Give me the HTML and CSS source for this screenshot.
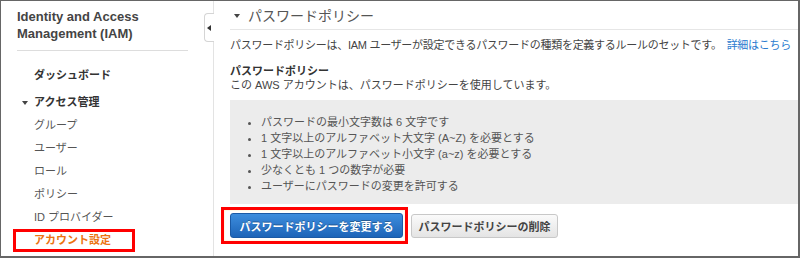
FILE: index.html
```html
<!DOCTYPE html>
<html lang="ja">
<head>
    <meta charset="utf-8">
    <title>IAM - アカウント設定</title>
    <link rel="stylesheet" href="styles.css">
</head>
<body>
    <div class="frame">
        <div class="sidebar">
            <h1 class="side-title">Identity and Access Management (IAM)</h1>
            <hr class="side-rule">
            <ul class="nav">
                <li class="nav-top">ダッシュボード</li>
                <li class="nav-group"><span class="caret"></span>アクセス管理</li>
                <li class="nav-item">グループ</li>
                <li class="nav-item">ユーザー</li>
                <li class="nav-item">ロール</li>
                <li class="nav-item">ポリシー</li>
                <li class="nav-item">ID プロバイダー</li>
                <li class="nav-item current">アカウント設定</li>
            </ul>
            <div class="collapse-tab"><span class="tab-arrow"></span></div>
        </div>

        <div class="main">
            <h2 class="section-head"><span class="caret"></span>パスワードポリシー</h2>
            <p class="intro">パスワードポリシーは、IAM ユーザーが設定できるパスワードの種類を定義するルールのセットです。<a href="#" class="link">詳細はこちら</a></p>
            <div class="status">
                <div class="status-title">パスワードポリシー</div>
                <div>この AWS アカウントは、パスワードポリシーを使用しています。</div>
            </div>
            <div class="rules">
                <ul>
                    <li>パスワードの最小文字数は 6 文字です</li>
                    <li>1 文字以上のアルファベット大文字 (A~Z) を必要とする</li>
                    <li>1 文字以上のアルファベット小文字 (a~z) を必要とする</li>
                    <li>少なくとも 1 つの数字が必要</li>
                    <li>ユーザーにパスワードの変更を許可する</li>
                </ul>
            </div>
            <div class="actions">
                <div class="mark">
                    <button class="btn btn-primary">パスワードポリシーを変更する</button>
                </div>
                <button class="btn btn-default">パスワードポリシーの削除</button>
            </div>
        </div>
    </div>
</body>
</html>
```

FILE: styles.css
```css
html, body {
    margin: 0;
    padding: 0;
    background: #fff;
}
body {
    font-family: "Liberation Sans", "Noto Sans CJK JP", sans-serif;
    font-size: 11px;
    color: #444;
}
.frame {
    box-sizing: border-box;
    width: 800px;
    height: 258px;
    border-top: 1px solid #666;
    border-left: 1px solid #666;
    border-right: 2px solid #666;
    border-bottom: 2px solid #666;
    display: flex;
    overflow: hidden;
}

/* sidebar */
.sidebar {
    position: relative;
    width: 213px;
    flex-shrink: 0;
    border-right: 1px solid #e3e3e3;
    padding: 7px 0 0 16px;
    box-sizing: border-box;
}
.side-title {
    margin: 0;
    font-size: 13px;
    line-height: 17px;
    font-weight: bold;
    color: #444;
}
.side-rule {
    border: none;
    border-top: 1px solid #ddd;
    margin: 8px 25px 0 0;
}
.nav {
    list-style: none;
    margin: 0;
    padding: 13px 0 0 0;
}
.nav li {
    line-height: 23px;
    height: 23px;
    padding-left: 17px;
    color: #555;
}
.nav .nav-top {
    font-weight: bold;
    color: #333;
    margin-bottom: 4px;
}
.nav .nav-group {
    font-weight: bold;
    color: #333;
    position: relative;
}
.caret {
    display: inline-block;
    width: 0;
    height: 0;
    border-left: 3px solid transparent;
    border-right: 3px solid transparent;
    border-top: 4px solid #444;
    vertical-align: middle;
}
.nav-group .caret {
    position: absolute;
    left: 5px;
    top: 10px;
}
.nav .current {
    box-sizing: border-box;
    width: 122px;
    margin-left: -4px;
    padding-left: 18px;
    border: 3px solid #f00;
    line-height: 17px;
    font-weight: bold;
    color: #ec7211;
}
.collapse-tab {
    position: absolute;
    top: 12px;
    right: -1px;
    width: 9px;
    height: 27px;
    background: #fff;
    border: 1px solid #d5d5d5;
    border-right: none;
    border-radius: 4px 0 0 4px;
}
.tab-arrow {
    position: absolute;
    left: 2px;
    top: 11px;
    width: 0;
    height: 0;
    border-top: 3px solid transparent;
    border-bottom: 3px solid transparent;
    border-right: 4px solid #333;
}

/* main */
.main {
    flex: 1;
    min-width: 0;
    padding-left: 16px;
}
.section-head {
    margin: 0;
    padding: 2px 0 0 4px;
    font-size: 14px;
    font-weight: normal;
    line-height: 26px;
    color: #555;
    border-bottom: 1px solid #e6e6e6;
}
.section-head .caret {
    margin: -2px 8px 0 0;
}
.intro {
    margin: 7px 0 0 0;
    line-height: 16px;
    white-space: nowrap;
    letter-spacing: -0.28px;
}
.link {
    color: #2b7bcf;
    text-decoration: none;
    margin-left: 5px;
}
.status {
    margin-top: 11px;
    line-height: 14px;
}
.status-title {
    font-weight: bold;
    color: #333;
}
.rules {
    margin-top: 8px;
    background: #ececec;
    padding: 14px 0 10px 0;
}
.rules ul {
    margin: 0;
    padding-left: 31px;
    color: #555;
}
.rules li {
    line-height: 16px;
}
.actions {
    display: flex;
    align-items: center;
    margin-top: 3px;
}
.mark {
    margin-left: -9px;
    border: 3px solid #f00;
    padding: 3px 2px 3px 6px;
    box-shadow: inset 0 0 2px #ffe9a8;
}
.btn {
    font-family: "Liberation Sans", "Noto Sans CJK JP", sans-serif;
    font-size: 11px;
    font-weight: bold;
    height: 25px;
    border-radius: 3px;
    padding: 0;
    white-space: nowrap;
    cursor: pointer;
}
.btn-primary {
    width: 173px;
    color: #fff;
    background: linear-gradient(#3d8ddd, #1d64b8);
    border: 1px solid #1b5aa5;
    text-shadow: 0 -1px 0 rgba(0, 0, 0, 0.3);
}
.btn-default {
    margin-left: 3px;
    width: 147px;
    height: 24px;
    color: #444;
    background: linear-gradient(#fafafa, #e4e4e4);
    border: 1px solid #c8c8c8;
}
```
